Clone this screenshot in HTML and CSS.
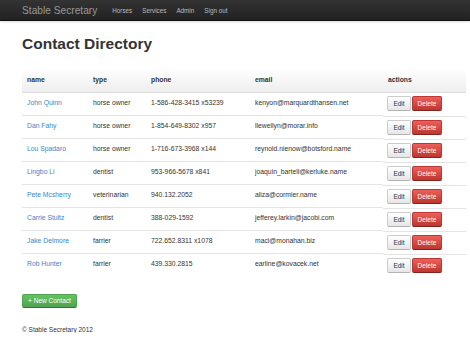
FILE: index.html
```html
<!DOCTYPE html>
<html>
<head>
<meta charset="utf-8">
<link rel="stylesheet" href="styles.css">
</head>
<body>
<div class="navbar">
  <div class="nav-inner">
    <a class="brand" href="#">Stable Secretary</a>
    <ul class="nav">
      <li><a href="#">Horses</a></li>
      <li><a href="#">Services</a></li>
      <li><a href="#">Admin</a></li>
      <li><a href="#">Sign out</a></li>
    </ul>
  </div>
</div>
<div class="container">
  <h1 class="title">Contact Directory</h1>
  <table class="contacts">
    <colgroup>
      <col class="c-name"><col class="c-type"><col class="c-phone"><col class="c-email"><col class="c-actions">
    </colgroup>
    <thead>
      <tr><th>name</th><th>type</th><th>phone</th><th>email</th><th>actions</th></tr>
    </thead>
    <tbody>
      <tr><td><a href="#">John Quinn</a></td><td>horse owner</td><td>1-586-428-3415 x53239</td><td>kenyon@marquardthansen.net</td><td class="actions"><a class="btn" href="#">Edit</a><a class="btn btn-danger" href="#">Delete</a></td></tr>
      <tr><td><a href="#">Dan Fahy</a></td><td>horse owner</td><td>1-854-649-8302 x957</td><td>llewellyn@morar.info</td><td class="actions"><a class="btn" href="#">Edit</a><a class="btn btn-danger" href="#">Delete</a></td></tr>
      <tr><td><a href="#">Lou Spadaro</a></td><td>horse owner</td><td>1-716-673-3968 x144</td><td>reynold.nienow@botsford.name</td><td class="actions"><a class="btn" href="#">Edit</a><a class="btn btn-danger" href="#">Delete</a></td></tr>
      <tr><td><a href="#">Lingbo Li</a></td><td>dentist</td><td>953-966-5678 x841</td><td>joaquin_bartell@kerluke.name</td><td class="actions"><a class="btn" href="#">Edit</a><a class="btn btn-danger" href="#">Delete</a></td></tr>
      <tr><td><a href="#">Pete Mcsherry</a></td><td>veterinarian</td><td>940.132.2052</td><td>aliza@cormier.name</td><td class="actions"><a class="btn" href="#">Edit</a><a class="btn btn-danger" href="#">Delete</a></td></tr>
      <tr><td><a href="#">Carrie Stultz</a></td><td>dentist</td><td>388-029-1592</td><td>jefferey.larkin@jacobi.com</td><td class="actions"><a class="btn" href="#">Edit</a><a class="btn btn-danger" href="#">Delete</a></td></tr>
      <tr><td><a href="#">Jake Delmore</a></td><td>farrier</td><td>722.652.8311 x1078</td><td>maci@monahan.biz</td><td class="actions"><a class="btn" href="#">Edit</a><a class="btn btn-danger" href="#">Delete</a></td></tr>
      <tr><td><a href="#">Rob Hunter</a></td><td>farrier</td><td>439.330.2815</td><td>earline@kovacek.net</td><td class="actions"><a class="btn" href="#">Edit</a><a class="btn btn-danger" href="#">Delete</a></td></tr>
    </tbody>
  </table>
  <a class="btn btn-success" href="#">+ New Contact</a>
  <footer class="footer">© Stable Secretary 2012</footer>
</div>
</body>
</html>
```
FILE: styles.css
```css
* { box-sizing: border-box; }
html, body { margin: 0; padding: 0; background: #fff; }
body {
  font-family: "Liberation Sans", Arial, sans-serif;
  font-size: 6.8px;
  color: #333;
}
a { text-decoration: none; }

.navbar {
  height: 21px;
  background: linear-gradient(#333, #222);
  border-bottom: 1px solid #111;
  box-shadow: 0 1px 2px rgba(0,0,0,0.15);
}
.nav-inner {
  display: flex;
  align-items: center;
  height: 100%;
  padding-left: 22px;
}
.brand {
  font-size: 10.2px;
  color: #999;
  margin-right: 15px;
}
.nav {
  display: flex;
  list-style: none;
  margin: 0;
  padding: 0;
  gap: 10px;
}
.nav a { color: #bbb; font-size: 6.3px; }

.container { padding: 0 4px 0 22px; }

.title {
  font-size: 15.5px;
  font-weight: bold;
  color: #333;
  margin: 0;
  padding-top: 13px;
  line-height: 20px;
  height: 47px;
}

.contacts {
  width: 444px;
  border-collapse: collapse;
  table-layout: fixed;
  margin-bottom: 17px;
}
.c-name { width: 66px; }
.c-type { width: 58px; }
.c-phone { width: 104px; }
.c-email { width: 133px; }
.c-actions { width: 83px; }

.contacts th {
  text-align: left;
  font-weight: bold;
  color: #333;
  height: 24px;
  padding: 0 5px;
  background: linear-gradient(#fff, #eee);
  border-bottom: 1px solid #ddd;
}
.contacts td {
  height: 23px;
  padding: 4px 5px 0;
  line-height: 11px;
  vertical-align: top;
  border-top: 1px solid #e4e4e4;
  white-space: nowrap;
}
.contacts tbody tr:first-child td { border-top: none; }
.contacts td a { color: #3a86c8; }
.contacts td.actions { padding: 3px 4px 0; display: flex; gap: 1px; }

.btn {
  display: inline-flex;
  align-items: center;
  justify-content: center;
  height: 15px;
  padding: 0 5px;
  font-size: 6.5px;
  color: #333 !important;
  background: linear-gradient(#fff, #e6e6e6);
  border: 1px solid #ccc;
  border-bottom-color: #b3b3b3;
  border-radius: 2px;
  width: 24px;
}
.btn-danger {
  color: #fff !important;
  background: linear-gradient(#ee5f5b, #bd362f);
  border-color: #bd362f #bd362f #802420;
  width: 30px;
}
.btn-success {
  width: 55px;
  height: 14px;
  color: #fff !important;
  background: linear-gradient(#62c462, #51a351);
  border-color: #51a351 #51a351 #387038;
}
.footer {
  margin-top: 18px;
  font-size: 6.5px;
  color: #333;
}
```
